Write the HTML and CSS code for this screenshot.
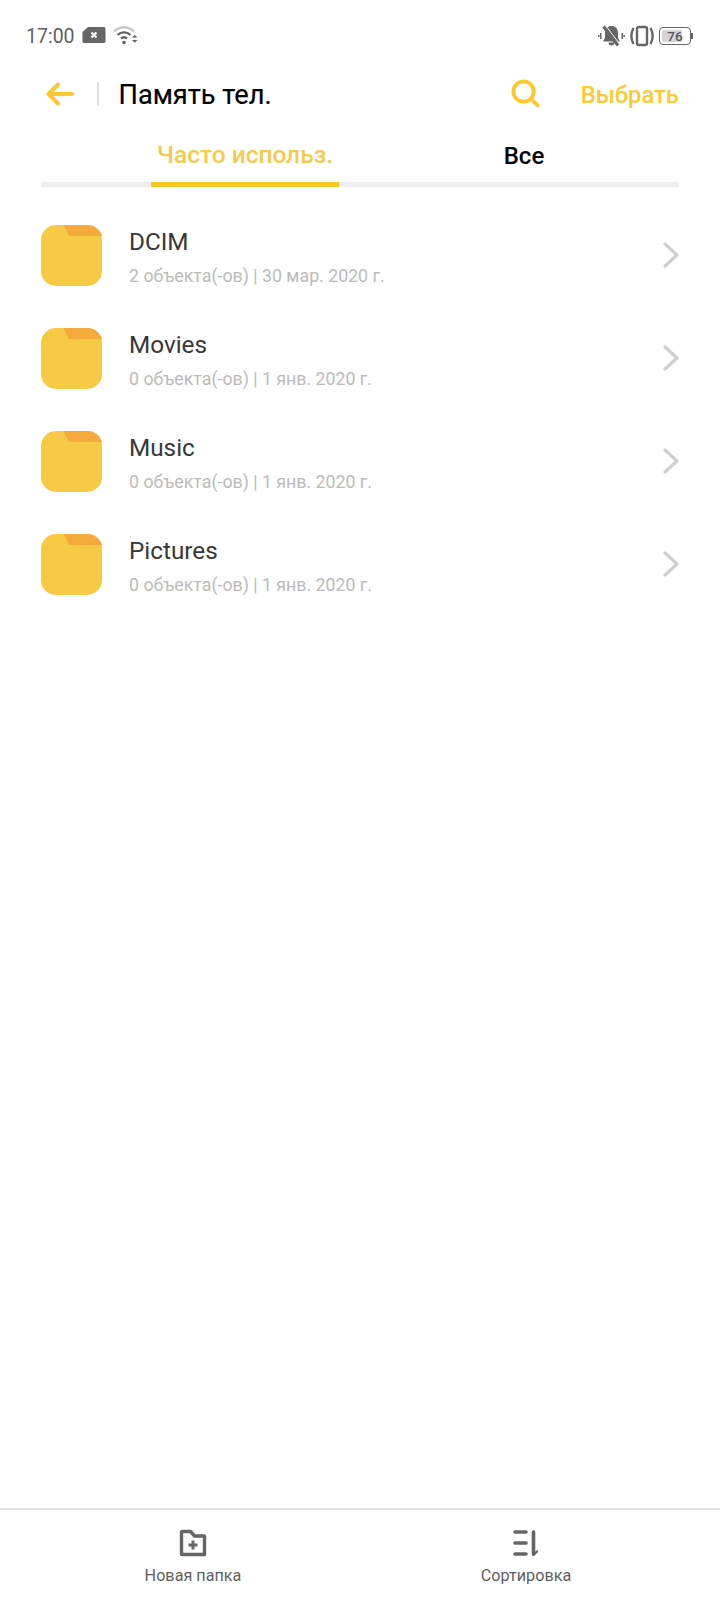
FILE: index.html
```html
<!DOCTYPE html>
<html lang="ru">
<head>
<meta charset="utf-8">
<title>Память тел.</title>
<link rel="stylesheet" href="styles.css">
</head>
<body>
<div class="page">
  <div class="status">
    <div class="status-group">
      <span class="time">17:00</span>
      <svg class="ic-x" width="24" height="18" viewBox="0 0 24 18"><path d="M6 1H22a1.500 1.500 0 0 1 1.500 1.500V15.500A1.500 1.500 0 0 1 22 17H2a1.500 1.500 0 0 1-1.500-1.500V6z" fill="#666"/><path d="M9.500 6.500l5 5M14.500 6.500l-5 5" stroke="#fff" stroke-width="2.200"/></svg>
      <svg class="ic-wifi" width="25" height="20" viewBox="0 0 25 20" fill="none"><path d="M1 6.500C6.500 1 15.500 1 21 6.500" stroke="#c4c4c4" stroke-width="2.400"/><path d="M4.500 10C8 6.500 14 6.500 17.500 10" stroke="#666" stroke-width="2.400"/><path d="M8 13.500C9.700 12 12.300 12 14 13.500" stroke="#666" stroke-width="2.400"/><circle cx="11" cy="17.500" r="1.800" fill="#666"/><path d="M19 12.500l2.700-2.800 2.800 2.800zM19 15l2.700 2.800 2.800-2.800z" fill="#666"/></svg>
    </div>
    <div class="status-group right">
      <svg width="27" height="22" viewBox="0 0 27 22"><path d="M13.500 1c3.800 0 6.500 2.700 6.500 6.500V13l2 3.500H5L7 13V7.500C7 3.700 9.700 1 13.500 1z" fill="#666"/><path d="M10.500 17.500h6a3 3 0 0 1-6 0z" fill="#666"/><path d="M7.500 0.500L22 19.500" stroke="#fff" stroke-width="1"/><path d="M5.500 1.500L20 20.500" stroke="#666" stroke-width="3"/><path d="M2.800 8v6M.8 10v2M24.200 8v6M26.200 10v2" stroke="#666" stroke-width="1.500"/></svg>
      <svg class="ic-vib" width="24" height="22" viewBox="0 0 24 22" fill="none" stroke="#666" stroke-width="2.400"><rect x="7" y="2" width="10" height="18" rx="2"/><path d="M3.500 3C.8 8 .8 14 3.500 19M20.500 3c2.700 5 2.700 11 0 16"/></svg>
      <div class="battery"><div class="battery-body"><div class="battery-fill"></div><span class="battery-num">76</span></div><div class="battery-tip"></div></div>
    </div>
  </div>

  <header class="bar">
    <svg class="back" width="28" height="24" viewBox="0 0 28 24" fill="none" stroke="#fdc82f" stroke-width="4" stroke-linecap="round" stroke-linejoin="round"><path d="M26 12H3M12 2.500L2.500 12l9.500 9.500"/></svg>
    <div class="sep"></div>
    <h1 class="title">Память тел.</h1>
    <svg class="search" width="29" height="29" viewBox="0 0 30 30" fill="none" stroke="#fdc82f" stroke-width="4" stroke-linecap="round"><circle cx="13" cy="13" r="10.500"/><path d="M21 21l6.500 6"/></svg>
    <span class="select">Выбрать</span>
  </header>

  <nav class="tabs">
    <div class="tab active"><span>Часто использ.</span></div>
    <div class="tab"><span>Все</span></div>
  </nav>

  <main class="list">
    <div class="row">
      <svg class="folder" width="61" height="61" viewBox="0 0 61 61"><rect width="61" height="61" rx="15" fill="#f6ca45"/><path d="M22.500 0H46a15 15 0 0 1 15 11H28z" fill="#f4ab3c"/></svg>
      <div class="text"><div class="name">DCIM</div><div class="meta">2 объекта(-ов) | 30 мар. 2020 г.</div></div>
      <svg class="chev" width="18" height="26" viewBox="0 0 18 26" fill="none" stroke="#cfcfcf" stroke-width="3.200" stroke-linecap="round" stroke-linejoin="round"><path d="M3 2l12 11L3 24"/></svg>
    </div>
    <div class="row">
      <svg class="folder" width="61" height="61" viewBox="0 0 61 61"><rect width="61" height="61" rx="15" fill="#f6ca45"/><path d="M22.500 0H46a15 15 0 0 1 15 11H28z" fill="#f4ab3c"/></svg>
      <div class="text"><div class="name">Movies</div><div class="meta">0 объекта(-ов) | 1 янв. 2020 г.</div></div>
      <svg class="chev" width="18" height="26" viewBox="0 0 18 26" fill="none" stroke="#cfcfcf" stroke-width="3.200" stroke-linecap="round" stroke-linejoin="round"><path d="M3 2l12 11L3 24"/></svg>
    </div>
    <div class="row">
      <svg class="folder" width="61" height="61" viewBox="0 0 61 61"><rect width="61" height="61" rx="15" fill="#f6ca45"/><path d="M22.500 0H46a15 15 0 0 1 15 11H28z" fill="#f4ab3c"/></svg>
      <div class="text"><div class="name">Music</div><div class="meta">0 объекта(-ов) | 1 янв. 2020 г.</div></div>
      <svg class="chev" width="18" height="26" viewBox="0 0 18 26" fill="none" stroke="#cfcfcf" stroke-width="3.200" stroke-linecap="round" stroke-linejoin="round"><path d="M3 2l12 11L3 24"/></svg>
    </div>
    <div class="row">
      <svg class="folder" width="61" height="61" viewBox="0 0 61 61"><rect width="61" height="61" rx="15" fill="#f6ca45"/><path d="M22.500 0H46a15 15 0 0 1 15 11H28z" fill="#f4ab3c"/></svg>
      <div class="text"><div class="name">Pictures</div><div class="meta">0 объекта(-ов) | 1 янв. 2020 г.</div></div>
      <svg class="chev" width="18" height="26" viewBox="0 0 18 26" fill="none" stroke="#cfcfcf" stroke-width="3.200" stroke-linecap="round" stroke-linejoin="round"><path d="M3 2l12 11L3 24"/></svg>
    </div>
  </main>

  <footer class="foot">
    <div class="action">
      <svg width="28" height="28" viewBox="0 0 28 28" fill="none" stroke="#666" stroke-width="3.400" stroke-linejoin="round"><path d="M3 2.500h8.500l4 4.500H25.500v18.500H2.500V3z"/><path d="M14 11.500v9M9.500 16h9" stroke-width="3"/></svg>
      <span>Новая папка</span>
    </div>
    <div class="action">
      <svg width="28" height="28" viewBox="0 0 28 28" fill="none" stroke="#666" stroke-width="3.600" stroke-linecap="round"><path d="M3 3h11M3 14h11M3 25h11M21.500 3v22"/><path d="M21.500 26l3.500-3.500" stroke-width="2.400"/></svg>
      <span>Сортировка</span>
    </div>
  </footer>
</div>
</body>
</html>
```
FILE: styles.css
```css
* { box-sizing: border-box; }
html, body { margin: 0; padding: 0; background: #fff; }
body { font-family: Roboto, "Liberation Sans", sans-serif; }
.page { width: 720px; height: 1600px; display: flex; flex-direction: column; }

.status { height: 70px; padding: 0 27px 0 26px; display: flex; justify-content: space-between; align-items: center; color: #666; }
.status-group { display: flex; align-items: center; gap: 7px; }
.status-group.right { gap: 5px; padding-top: 1px; }
.time { font-size: 19.500px; color: #5f5f5f; padding-top: 2px; }
.ic-wifi { margin-left: 0; }
.battery { display: flex; align-items: center; }
.battery-body { position: relative; width: 32px; height: 18px; border: 1.500px solid #666; border-radius: 4px; display: flex; align-items: center; justify-content: center; }
.battery-fill { position: absolute; left: 2px; top: 2px; bottom: 2px; width: 20px; background: #d6d6d6; border-radius: 1px; }
.battery-num { position: relative; font-size: 13.500px; font-weight: 500; color: #555; }
.battery-tip { width: 2px; height: 6px; background: #666; }

.bar { height: 48px; padding: 0 41px 0 46px; display: flex; align-items: center; }
.back { flex: none; }
.sep { width: 1.500px; height: 24px; background: #e0e0e0; margin-left: 23px; }
.title { margin: 2px 0 0 20px; font-size: 27.200px; font-weight: 400; color: #000; flex: 1; -webkit-text-stroke: 0.2px #000; }
.search { margin-right: 41px; margin-top: -2px; }
.select { font-size: 23.800px; font-weight: 500; color: #fdc933; padding-top: 2px; }

.tabs { height: 69px; margin: 0 41px; display: flex; border-bottom: 5px solid #efefef; }
.tab { flex: 1; display: flex; justify-content: center; align-items: center; font-size: 24px; font-weight: 500; color: #000; margin-bottom: -5px; padding-top: 7px; }
.tab.active { flex: none; width: 188px; margin-left: 110px; margin-right: 110px; padding-top: 9px; font-size: 24.500px; white-space: nowrap; color: #f6ca4e; border-bottom: 5px solid #f9c723; }
.tab:last-child { flex: none; width: 120px; margin-left: 15px; }

.list { flex: 1; padding-top: 38px; }
.row { height: 103px; padding: 0 40px 0 41px; display: flex; align-items: flex-start; }
.folder { flex: none; }
.text { flex: 1; margin-left: 27px; }
.name { font-size: 24.300px; line-height: 32px; margin-top: 1px; color: #383838; }
.meta { font-size: 17.750px; line-height: 24px; margin-top: 6px; color: #bbb; }
.chev { flex: none; margin-top: 17px; }

.foot { height: 92px; padding: 0 27.500px 0 26.500px; border-top: 2px solid #e4e4e4; display: flex; }
.action { flex: 1; display: flex; flex-direction: column; align-items: center; padding-top: 19px; font-size: 16.200px; color: #5f5f5f; }
.action span { margin-top: 7px; line-height: 24px; }
```
